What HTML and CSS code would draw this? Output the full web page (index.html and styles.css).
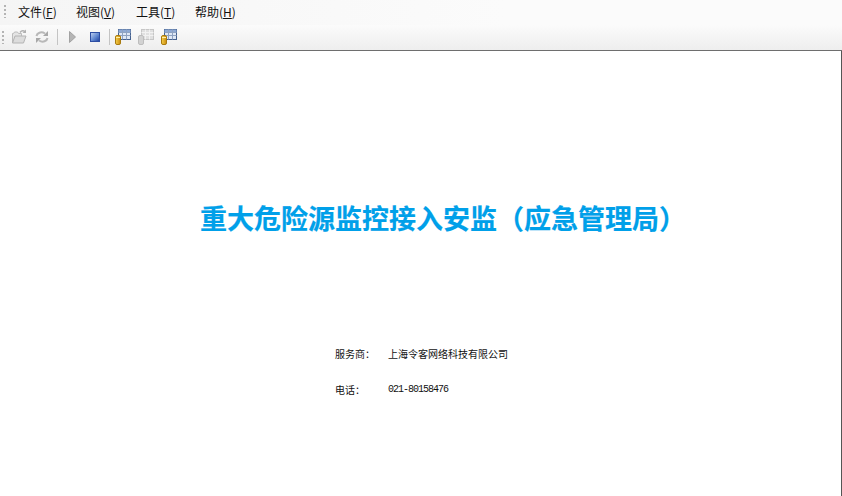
FILE: index.html
```html
<!DOCTYPE html>
<html lang="zh-CN">
<head>
<meta charset="utf-8">
<title>重大危险源监控接入安监（应急管理局）</title>
<link rel="stylesheet" href="styles.css">
</head>
<body>
<header class="menubar">
  <span class="grip grip-menu"></span>
  <nav class="menu">
    <span class="menu-item">文件(<u>F</u>)</span>
    <span class="menu-item">视图(<u>V</u>)</span>
    <span class="menu-item">工具(<u>T</u>)</span>
    <span class="menu-item">帮助(<u>H</u>)</span>
  </nav>
</header>
<div class="toolbar">
  <span class="grip"></span>
  <svg class="icon icon-open" viewBox="0 0 16 16"><path d="M1.500 14V4.500h1l1-1.500h3l1 1.500h3V7" fill="#e4e4e4" stroke="#bcbcbc"/><path d="M1.500 14l2.500-7h11l-2.500 7z" fill="#dcdcdc" stroke="#b4b4b4"/><path d="M9 3.500c1.500-2 3.500-2 5-1" fill="none" stroke="#b0b0b0" stroke-width="1.500"/><path d="M15 .5V4h-3.500z" fill="#b0b0b0"/></svg>
  <svg class="icon icon-refresh" viewBox="0 0 16 16"><path d="M2.500 7c.5-3 4.500-5 8.500-2.500" fill="none" stroke="#b8b8b8" stroke-width="2"/><path d="M14 2v5H9z" fill="#a8a8a8"/><path d="M13.500 9c-.5 3-4.500 5-8.500 2.500" fill="none" stroke="#b8b8b8" stroke-width="2"/><path d="M2 14V9h5z" fill="#a8a8a8"/></svg>
  <span class="sep"></span>
  <svg class="icon icon-play" viewBox="0 0 16 16"><path d="M4.500 2.500l6 5.500-6 5.500z" fill="#b5b5b5" stroke="#a2a2a2"/></svg>
  <svg class="icon icon-stop" viewBox="0 0 16 16"><defs><linearGradient id="stop" x1="0" y1="0" x2="1" y2="1"><stop offset="0" stop-color="#c5d6f2"/><stop offset=".55" stop-color="#5f86cf"/><stop offset="1" stop-color="#1c3f9c"/></linearGradient></defs><rect x="3.500" y="3.500" width="9" height="9" fill="url(#stop)" stroke="#2d4ea3"/></svg>
  <span class="sep sep-data"></span>
  <svg class="icon icon-data" viewBox="0 0 16 18">
    <defs>
      <linearGradient id="can" x1="0" y1="0" x2="1" y2="0"><stop offset="0" stop-color="#f7d14a"/><stop offset="1" stop-color="#c98a10"/></linearGradient>
      <g id="grid-color"><rect x="3.500" y="1.500" width="12" height="10" fill="#dfe8f6" stroke="#44618f"/><rect x="3.500" y="1.500" width="12" height="3" fill="#8ea9d4"/><path d="M3.500 4.500h12M3.500 7.500h12M7.500 1.500v10M11.500 1.500v10" stroke="#8fa3c2"/><rect x=".5" y="7.500" width="5" height="9" rx="1.500" fill="url(#can)" stroke="#a87a10"/><path d="M1 9.500h4" stroke="#fff0a8"/></g>
    </defs>
    <use href="#grid-color"/>
  </svg>
  <svg class="icon icon-data icon-next" viewBox="0 0 16 18"><rect x="3.500" y="1.500" width="12" height="10" fill="#e0e0e0" stroke="#c6c6c6"/><path d="M3.500 4.500h12M3.500 7.500h12M7.500 1.500v10M11.500 1.500v10" stroke="#f2f2f2"/><rect x=".5" y="7.500" width="5" height="9" rx="1.500" fill="#d2d2d2" stroke="#bdbdbd"/></svg>
  <svg class="icon icon-data icon-next" viewBox="0 0 16 18"><use href="#grid-color"/></svg>
</div>
<main class="splash">
  <h1 class="title">重大危险源监控接入安监（应急管理局）</h1>
  <dl class="info">
    <div class="info-row"><dt>服务商：</dt><dd>上海令客网络科技有限公司</dd></div>
    <div class="info-row"><dt>电话：</dt><dd class="num">021-80158476</dd></div>
  </dl>
</main>
</body>
</html>
```
FILE: styles.css
```css
* { box-sizing: border-box; }
html, body { height: 100%; }
body {
  margin: 0;
  display: flex;
  flex-direction: column;
  height: 496px;
  overflow: hidden;
  background: #fff;
  color: #000;
  font-family: "Noto Sans CJK SC", "Liberation Sans", sans-serif;
}
.menubar {
  flex: 0 0 25px;
  display: flex;
  align-items: center;
  padding-left: 4px;
  padding-bottom: 2px;
  background: linear-gradient(90deg, #f5f5f5, #fbfbfb 60%, #fbfbfb);
}
.grip {
  flex: none;
  width: 3px;
  height: 13px;
  background-image: linear-gradient(#b4b4b4 2px, transparent 2px);
  background-size: 2px 4px;
  background-repeat: repeat-y;
}
.menu {
  display: flex;
  margin-left: 11px;
  font-size: 12px;
  line-height: 16px;
  color: #111;
}
.menu-item { display: block; width: 59px; }
.menu-item:first-child { width: 58px; }
.menu-item:nth-child(2) { width: 60px; }
.toolbar {
  flex: 0 0 26px;
  display: flex;
  align-items: center;
  padding-left: 2px;
  padding-bottom: 1px;
  background: linear-gradient(#fbfbfb, #eeeeee);
  border-bottom: 1px solid #6e6e6e;
}
.icon { flex: none; width: 16px; height: 16px; }
.icon-open { margin-left: 6px; }
.icon-refresh { margin-left: 7px; }
.sep { flex: none; width: 1px; height: 16px; margin-left: 7px; background: #c4c4c4; }
.icon-play { margin-left: 7px; }
.icon-stop { margin-left: 6px; }
.sep-data { margin-left: 6px; }
.icon-data { width: 16px; height: 18px; margin-left: 5px; }
.icon-next { margin-left: 7px; }
.splash {
  flex: 1;
  min-height: 0;
  display: flex;
  flex-direction: column;
  border-right: 1px solid #555;
}
.title {
  margin: 148px 0 0 200px;
  font-size: 27px;
  line-height: 38px;
  font-weight: 700;
  color: #00a0e9;
  -webkit-text-stroke: 0.2px #00a0e9;
  white-space: nowrap;
}
.info {
  margin: 109px 0 0 335px;
  font-size: 10px;
  line-height: 15px;
  color: #111;
}
.info-row { display: flex; margin-bottom: 21px; }
.info-row dt { width: 53px; }
.info-row dd { margin: 0; }
.info-row .num {
  font-family: "Liberation Mono", monospace;
  letter-spacing: -1px;
}
```
